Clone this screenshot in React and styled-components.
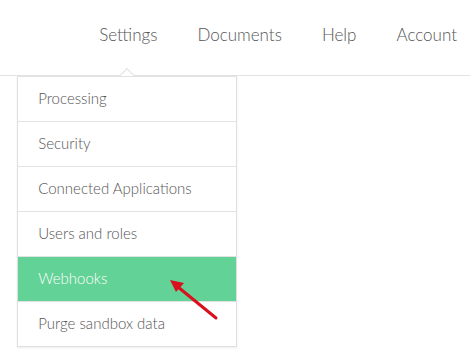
import React from 'react'
import styled, { createGlobalStyle } from 'styled-components'

const GlobalStyle = createGlobalStyle`
  *, *::before, *::after {
    box-sizing: border-box;
  }
  html, body {
    margin: 0;
    padding: 0;
    background: #fff;
    font-family: Lato, "Open Sans", sans-serif;
  }
`

const items = [
  'Processing',
  'Security',
  'Connected Applications',
  'Users and roles',
  'Webhooks',
  'Purge sandbox data',
]

const App = () => {
  return (
    <Page>
      <GlobalStyle />
      <Header>
        <Nav>
          <NavItem>
            Settings
            <Dropdown>
              <Caret />
              {items.map((item) => (
                <MenuItem key={item} active={item === 'Webhooks'}>
                  {item}
                </MenuItem>
              ))}
            </Dropdown>
          </NavItem>
          <NavItem>Documents</NavItem>
          <NavItem>Help</NavItem>
          <NavItem>Account</NavItem>
        </Nav>
      </Header>
      <Pointer width="470" height="359" viewBox="0 0 470 359">
        <line x1="216" y1="318" x2="178" y2="287" stroke="#d9101d" strokeWidth="3" strokeLinecap="round" />
        <polygon points="170,280 184,283 176,292" fill="#d9101d" />
      </Pointer>
    </Page>
  )
}

export default App

const Page = styled.div`
  position: relative;
  width: 470px;
  height: 359px;
  overflow: hidden;
`

const Header = styled.div`
  height: 76px;
  border-bottom: 1px solid #e2e2e2;
  display: flex;
  justify-content: flex-end;
  align-items: flex-start;
  padding: 25px 13px 0 0;
`

const Nav = styled.div`
  display: flex;
  gap: 40px;
  align-items: center;
`

const NavItem = styled.div`
  position: relative;
  font-size: 17px;
  font-weight: 300;
  color: #555;
  line-height: 20px;
`

const Dropdown = styled.div`
  position: absolute;
  top: 51px;
  left: -82px;
  width: 220px;
  background: #fff;
  border: 1px solid #e0e0e0;
  border-top: none;
  box-shadow: 0 1px 2px rgba(0, 0, 0, 0.08);
  z-index: 2;
`

const Caret = styled.div`
  position: absolute;
  top: -6px;
  left: 104px;
  width: 10px;
  height: 10px;
  background: #fff;
  border-left: 1px solid #e0e0e0;
  border-top: 1px solid #e0e0e0;
  transform: rotate(45deg);
`

const MenuItem = styled.div`
  position: relative;
  height: 45px;
  display: flex;
  align-items: center;
  padding: 0 0 2px 20px;
  font-size: 15px;
  color: ${(p) => (p.active ? '#fff' : '#555')};
  background: ${(p) => (p.active ? '#62d296' : '#fff')};
  border-top: 1px solid #e2e2e2;
  &:first-of-type {
    border-top: none;
    height: 44px;
  }
`

const Pointer = styled.svg`
  position: absolute;
  top: 0;
  left: 0;
  z-index: 3;
  pointer-events: none;
`
